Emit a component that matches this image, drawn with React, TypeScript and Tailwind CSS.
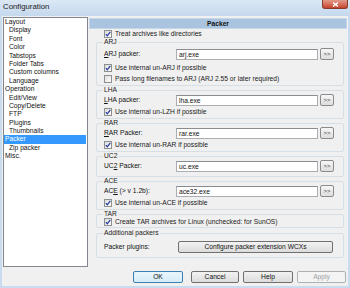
import React from 'react'

const treeItems: { label: string; level: number; selected?: boolean }[] = [
  { label: 'Layout', level: 0 },
  { label: 'Display', level: 1 },
  { label: 'Font', level: 1 },
  { label: 'Color', level: 1 },
  { label: 'Tabstops', level: 1 },
  { label: 'Folder Tabs', level: 1 },
  { label: 'Custom columns', level: 1 },
  { label: 'Language', level: 1 },
  { label: 'Operation', level: 0 },
  { label: 'Edit/View', level: 1 },
  { label: 'Copy/Delete', level: 1 },
  { label: 'FTP', level: 1 },
  { label: 'Plugins', level: 1 },
  { label: 'Thumbnails', level: 1 },
  { label: 'Packer', level: 0, selected: true },
  { label: 'Zip packer', level: 1 },
  { label: 'Misc.', level: 0 },
]

function CheckBox({ checked, label }: { checked: boolean; label: string }) {
  return (
    <div className="flex items-center h-[8px]">
      <div className="w-[8px] h-[8px] border border-[#8e8f8f] bg-linear-to-br from-[#dcdcdc] to-white flex items-center justify-center">
        {checked && (
          <svg width="6" height="6" viewBox="0 0 6 6">
            <path d="M0.8 3.2 L2.3 4.8 L5.3 0.9" stroke="#21399c" strokeWidth="1.2" fill="none" />
          </svg>
        )}
      </div>
      <span className="ml-[3px] leading-[8px] text-[#1a1a1a]">{label}</span>
    </div>
  )
}

function Group({ title, className, children }: { title: string; className?: string; children: React.ReactNode }) {
  return (
    <fieldset className={`ml-[7px] mr-[3px] border border-[#d5dfe5] rounded-[2px] pl-[7px] ${className ?? ''}`}>
      <legend className="ml-[-1px] px-[1px] leading-[8px] h-[8px] text-[#1a1a1a]">{title}</legend>
      {children}
    </fieldset>
  )
}

function PackerRow({ label, value }: { label: React.ReactNode; value: string }) {
  return (
    <div className="flex items-center h-[12px]">
      <span className="w-[72px] leading-[8px]">{label}</span>
      <div className="w-[142px] h-[11px] bg-white border border-[#abadb3] border-t-[#8a8c92] pl-[2px] leading-[9px]">
        {value}
      </div>
      <button className="ml-[2px] w-[14px] h-[12px] border border-[#8b8b8b] rounded-[2px] bg-linear-to-b from-[#f6f6f6] to-[#dedede] text-[6px] leading-[10px] text-[#333] flex items-center justify-center">
        &gt;&gt;
      </button>
    </div>
  )
}

function DlgButton({ label, className }: { label: string; className?: string }) {
  return (
    <button
      className={`h-[12px] rounded-[2px] border bg-linear-to-b flex items-center justify-center leading-[10px] ${className ?? ''}`}
    >
      {label}
    </button>
  )
}

export default function App() {
  return (
    <div className="w-[350px] h-[288px] bg-[#c9dbee] flex flex-col font-['Liberation_Sans',Arial,sans-serif] text-[6.7px] text-[#111] overflow-hidden">
      {/* title bar */}
      <div className="h-[16px] flex items-start bg-linear-to-b from-[#dbe8f5] to-[#c4d8ed]">
        <span className="ml-[3px] mt-[2px] text-[7.8px] leading-[9px] text-[#1b1b1b]">Configuration</span>
        <div className="ml-auto mr-[2px] w-[26px] h-[9px] rounded-b-[3px] border border-t-0 border-[#8b3a2e] bg-linear-to-b from-[#e39a8a] to-[#c4422b] flex items-center justify-center">
          <svg width="7" height="5" viewBox="0 0 7 5">
            <path d="M1 0.5 L6 4.5 M6 0.5 L1 4.5" stroke="white" strokeWidth="1.4" />
          </svg>
        </div>
      </div>

      {/* client area */}
      <div className="flex-1 mx-[2px] mb-[2px] bg-[#f0f0f0] flex flex-col">
        <div className="flex pt-[1px]">
          {/* tree */}
          <div className="ml-[1px] w-[85px] h-[250px] bg-white border border-[#828790] pt-0">
            {treeItems.map(item => (
              <div
                key={item.label}
                className={`h-[8.4px] leading-[8.4px] mr-[1px] ${item.level ? 'pl-[5px]' : 'pl-[1px]'} ${
                  item.selected ? 'bg-[#3399ff] text-white' : 'text-[#111]'
                }`}
              >
                {item.label}
              </div>
            ))}
          </div>

          {/* packer page */}
          <div className="ml-[1px] mt-[1px] w-[258px] flex flex-col">
            <div className="h-[11px] bg-[#aac4e0] border border-[#c4d6ea] font-bold text-center leading-[9px] text-[#111]">
              Packer
            </div>
            <div className="mt-[1px] pl-[15px]">
              <CheckBox checked label="Treat archives like directories" />
            </div>

            <Group title="ARJ" className="pb-[2px]">
              <div className="mt-[2px]">
                <PackerRow label={<><span className="underline">A</span>RJ packer:</>} value="arj.exe" />
              </div>
              <div className="mt-[4px]">
                <CheckBox checked label="Use internal un-ARJ if possible" />
              </div>
              <div className="mt-[3px]">
                <CheckBox checked={false} label="Pass long filenames to ARJ (ARJ 2.55 or later required)" />
              </div>
            </Group>

            <Group title="LHA" className="pb-[2px]">
              <PackerRow label={<><span className="underline">L</span>HA packer:</>} value="lha.exe" />
              <div className="mt-[2px]">
                <CheckBox checked label="Use internal un-LZH if possible" />
              </div>
            </Group>

            <Group title="RAR" className="pb-[2px]">
              <PackerRow label={<><span className="underline">R</span>AR Packer:</>} value="rar.exe" />
              <div className="mt-[2px]">
                <CheckBox checked label="Use internal un-RAR if possible" />
              </div>
            </Group>

            <Group title="UC2" className="pb-[4px]">
              <PackerRow label={<>UC<span className="underline">2</span> Packer:</>} value="uc.exe" />
            </Group>

            <Group title="ACE" className="pb-[2px]">
              <PackerRow label={<>AC<span className="underline">E</span> (&gt; v 1.2b):</>} value="ace32.exe" />
              <div className="mt-[2px]">
                <CheckBox checked label="Use internal un-ACE if possible" />
              </div>
            </Group>

            <Group title="TAR" className="pb-[1px]">
              <CheckBox checked label="Create TAR archives for Linux (unchecked: for SunOS)" />
            </Group>

            <Group title="Additional packers" className="mt-[1px] pb-[4px]">
              <div className="mt-[4px] flex items-center h-[12px]">
                <span className="w-[74px] leading-[8px]">Packer plugins:</span>
                <DlgButton
                  label="Configure packer extension WCXs"
                  className="w-[155px] border-[#707070] from-[#f2f2f2] to-[#dcdcdc]"
                />
              </div>
            </Group>
          </div>
        </div>

        {/* dialog buttons */}
        <div className="flex mt-[4px]">
          <DlgButton label="OK" className="ml-[131px] w-[50px] border-[#3c7fb1] from-[#eaf6fd] to-[#d6ecf8]" />
          <DlgButton label="Cancel" className="ml-[8px] w-[48px] border-[#707070] from-[#f2f2f2] to-[#dcdcdc]" />
          <DlgButton label="Help" className="ml-[4px] w-[50px] border-[#707070] from-[#f2f2f2] to-[#dcdcdc]" />
          <DlgButton label="Apply" className="ml-[4px] w-[49px] border-[#adb2b5] from-[#f4f4f4] to-[#f4f4f4] text-[#a0a0a0]" />
        </div>
      </div>
    </div>
  )
}
